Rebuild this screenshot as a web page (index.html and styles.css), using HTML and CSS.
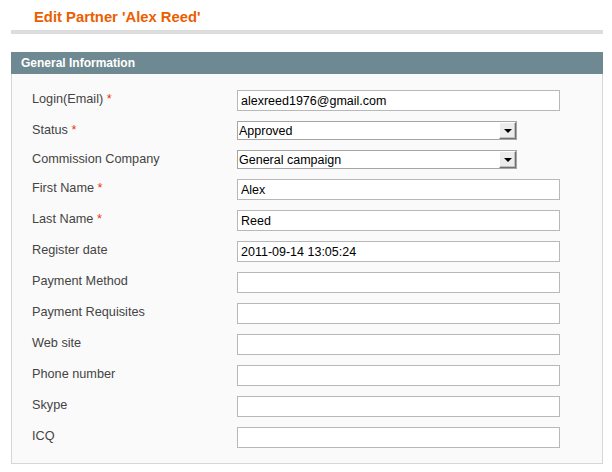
FILE: index.html
```html
<!DOCTYPE html>
<html lang="en">
<head>
    <meta charset="UTF-8">
    <title>Edit Partner</title>
    <link rel="stylesheet" href="styles.css">
</head>
<body>
    <div class="page">
        <div class="page-head">
            <h3>Edit Partner 'Alex Reed'</h3>
        </div>

        <div class="fieldset-head">General Information</div>
        <div class="fieldset">
            <div class="row">
                <label>Login(Email) <span class="req">*</span></label>
                <input class="input-text" type="text" value="alexreed1976@gmail.com">
            </div>
            <div class="row row-select">
                <label>Status <span class="req">*</span></label>
                <div class="select">
                    <select><option>Approved</option></select>
                    <span class="select-btn"></span>
                </div>
            </div>
            <div class="row row-select">
                <label>Commission Company</label>
                <div class="select">
                    <select><option>General campaign</option></select>
                    <span class="select-btn"></span>
                </div>
            </div>
            <div class="row">
                <label>First Name <span class="req">*</span></label>
                <input class="input-text" type="text" value="Alex">
            </div>
            <div class="row">
                <label>Last Name <span class="req">*</span></label>
                <input class="input-text" type="text" value="Reed">
            </div>
            <div class="row">
                <label>Register date</label>
                <input class="input-text" type="text" value="2011-09-14 13:05:24">
            </div>
            <div class="row">
                <label>Payment Method</label>
                <input class="input-text" type="text" value="">
            </div>
            <div class="row">
                <label>Payment Requisites</label>
                <input class="input-text" type="text" value="">
            </div>
            <div class="row">
                <label>Web site</label>
                <input class="input-text" type="text" value="">
            </div>
            <div class="row">
                <label>Phone number</label>
                <input class="input-text" type="text" value="">
            </div>
            <div class="row">
                <label>Skype</label>
                <input class="input-text" type="text" value="">
            </div>
            <div class="row">
                <label>ICQ</label>
                <input class="input-text" type="text" value="">
            </div>
        </div>
    </div>
</body>
</html>
```

FILE: styles.css
```css
* {
    margin: 0;
    padding: 0;
    box-sizing: border-box;
}

body {
    font-family: "Liberation Sans", Arial, sans-serif;
    background-color: #fff;
    color: #444;
}

.page {
    width: 592px;
    margin-left: 11px;
}

.page-head {
    height: 34px;
    padding: 8px 0 0 23px;
    border-bottom: 4px solid #dddddd;
}

.page-head h3 {
    font-size: 14.8px;
    line-height: 18px;
    font-weight: bold;
    color: #eb5e00;
}

.fieldset-head {
    margin-top: 18px;
    height: 22px;
    padding-left: 10px;
    background-color: #6f8992;
    color: #fff;
    font-size: 12px;
    font-weight: bold;
    line-height: 22px;
}

.fieldset {
    background-color: #fafafa;
    border: 1px solid #d6d6d6;
    border-top: none;
    padding: 16px 20px 5px 20px;
    width: 592px;
}

.row {
    display: flex;
    height: 31px;
}

.row-select {
    height: 29px;
}

.row label {
    width: 205px;
    font-size: 12.7px;
    line-height: 19px;
    color: #444;
}

.req {
    color: #eb340a;
}

.input-text {
    width: 323px;
    height: 21px;
    border: 1px solid #b8b8b8;
    background-color: #fff;
    padding: 0 3px;
    font-family: inherit;
    font-size: 12.5px;
    color: #000;
    outline: none;
}

.select {
    display: flex;
    width: 280px;
    height: 19px;
    border: 1px solid #a5a5a5;
    background-color: #fff;
}

.select select {
    flex: 1;
    appearance: none;
    -webkit-appearance: none;
    border: none;
    background: transparent;
    padding-left: 1px;
    font-family: inherit;
    font-size: 12.5px;
    color: #000;
    outline: none;
}

.select-btn {
    width: 17px;
    height: 17px;
    background-color: #ececec;
    border-top: 1px solid #fff;
    border-left: 1px solid #fff;
    border-right: 1px solid #707070;
    border-bottom: 1px solid #707070;
    box-shadow: inset -1px -1px 0 #c0c0c0;
    display: flex;
    align-items: center;
    justify-content: center;
}

.select-btn::after {
    content: "";
    border-left: 4px solid transparent;
    border-right: 4px solid transparent;
    border-top: 4px solid #000;
    margin-top: 1px;
}
```
